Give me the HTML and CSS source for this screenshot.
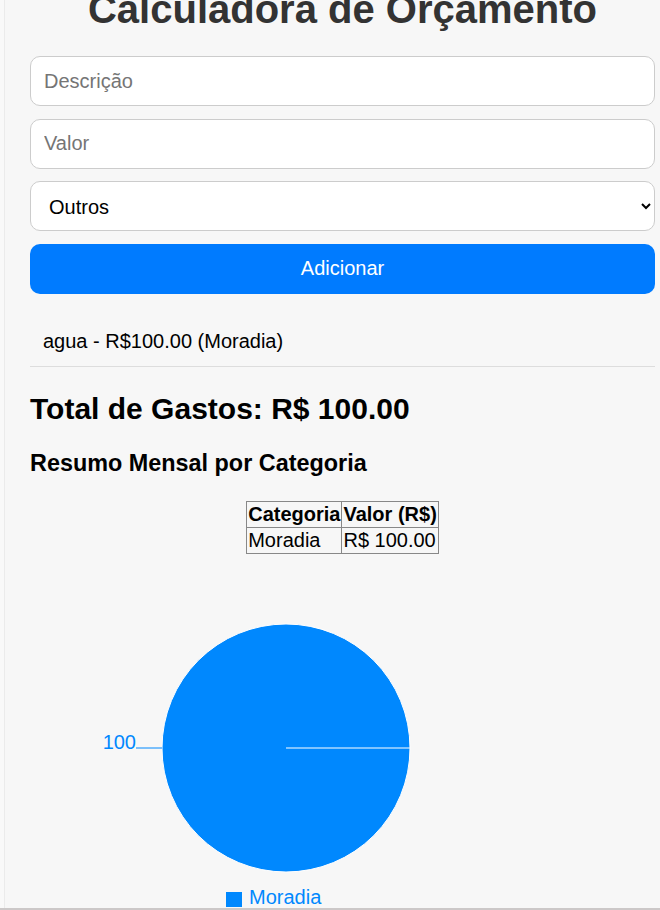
FILE: index.html
```html
<!DOCTYPE html>
<html lang="pt-BR">
<head>
<meta charset="utf-8">
<title>Calculadora de Orçamento</title>
<link rel="stylesheet" href="styles.css">
</head>
<body>
<div class="frame">
  <div class="container">
    <h1 class="title">Calculadora de Orçamento</h1>
    <div class="form">
      <input class="field" type="text" placeholder="Descrição">
      <input class="field" type="number" placeholder="Valor">
      <select class="field select">
        <option>Outros</option>
      </select>
      <button class="btn">Adicionar</button>
    </div>
    <ul class="list">
      <li class="item">agua - R$100.00 (Moradia)</li>
    </ul>
    <h2 class="total">Total de Gastos: R$ 100.00</h2>
    <h3 class="summary">Resumo Mensal por Categoria</h3>
    <table class="table">
      <thead>
        <tr><th>Categoria</th><th>Valor (R$)</th></tr>
      </thead>
      <tbody>
        <tr><td>Moradia</td><td>R$ 100.00</td></tr>
      </tbody>
    </table>
    <svg class="chart" width="625" height="344" viewBox="0 0 625 344">
      <circle cx="256" cy="184" r="124" fill="#0088FE" stroke="#ffffff" stroke-width="1"/>
      <line x1="256" y1="184" x2="380" y2="184" stroke="#ffffff" stroke-width="1.2"/>
      <line x1="106" y1="184" x2="132" y2="184" stroke="#0088FE" stroke-width="1"/>
      <text x="106" y="185" text-anchor="end" class="chart-label">100</text>
      <rect x="196" y="328" width="16" height="15" fill="#0088FE"/>
      <text x="219" y="340" class="chart-legend">Moradia</text>
    </svg>
  </div>
</div>
</body>
</html>
```
FILE: styles.css
```css
html, body {
  margin: 0;
  padding: 0;
  overflow: hidden;
  background: #f9f9f9;
}

body {
  font-family: "Liberation Sans", Arial, sans-serif;
  font-size: 20px;
  color: #000;
}

.frame {
  width: 660px;
  height: 908px;
  overflow: hidden;
  border-bottom: 2px solid #ccc8c8;
  background: #f9f9f9;
}

.container {
  margin-left: 4px;
  border-left: 1px solid #ebebeb;
  background: #f7f7f7;
  width: 625px;
  padding: 0 25px 40px;
  min-height: 1000px;
}

.title {
  margin: -14px 0 24px;
  font-size: 40px;
  line-height: 46px;
  font-weight: bold;
  text-align: center;
  color: #333;
}

.form {
  display: flex;
  flex-direction: column;
  gap: 12.5px;
}

.field {
  box-sizing: border-box;
  width: 100%;
  height: 50px;
  padding: 12px 13px;
  border: 1px solid #ccc;
  border-radius: 10px;
  background: #fff;
  font-family: "Liberation Sans", Arial, sans-serif;
  font-size: 20px;
  color: #000;
  outline: none;
  margin: 0;
}

.field::placeholder {
  color: #757575;
}

.select {
  padding: 2px 10px 0 14px;
}

.btn {
  box-sizing: border-box;
  width: 100%;
  height: 50px;
  border: none;
  border-radius: 10px;
  background: #007bff;
  color: #fff;
  font-family: "Liberation Sans", Arial, sans-serif;
  font-size: 20px;
  margin: 0;
}

.list {
  list-style: none;
  margin: 23px 0 0;
  padding: 0;
}

.item {
  padding: 13px 13px;
  line-height: 23px;
  border-bottom: 1px solid #ddd;
}

.total {
  margin: 25px 0 0;
  font-size: 30px;
  line-height: 34.5px;
  font-weight: bold;
}

.summary {
  margin: 24px 0 0;
  font-size: 23.4px;
  line-height: 27px;
  font-weight: bold;
}

.table {
  border-collapse: collapse;
  margin: 23.5px auto 0;
  font-size: 20px;
  line-height: 23px;
}

.table th,
.table td {
  border: 1px solid #888;
  padding: 1px;
  text-align: left;
}

.table th {
  font-weight: bold;
}

.chart {
  display: block;
  margin-top: 10px;
}

.chart-label,
.chart-legend {
  font-family: "Liberation Sans", Arial, sans-serif;
  font-size: 20px;
  fill: #0088FE;
}
```
